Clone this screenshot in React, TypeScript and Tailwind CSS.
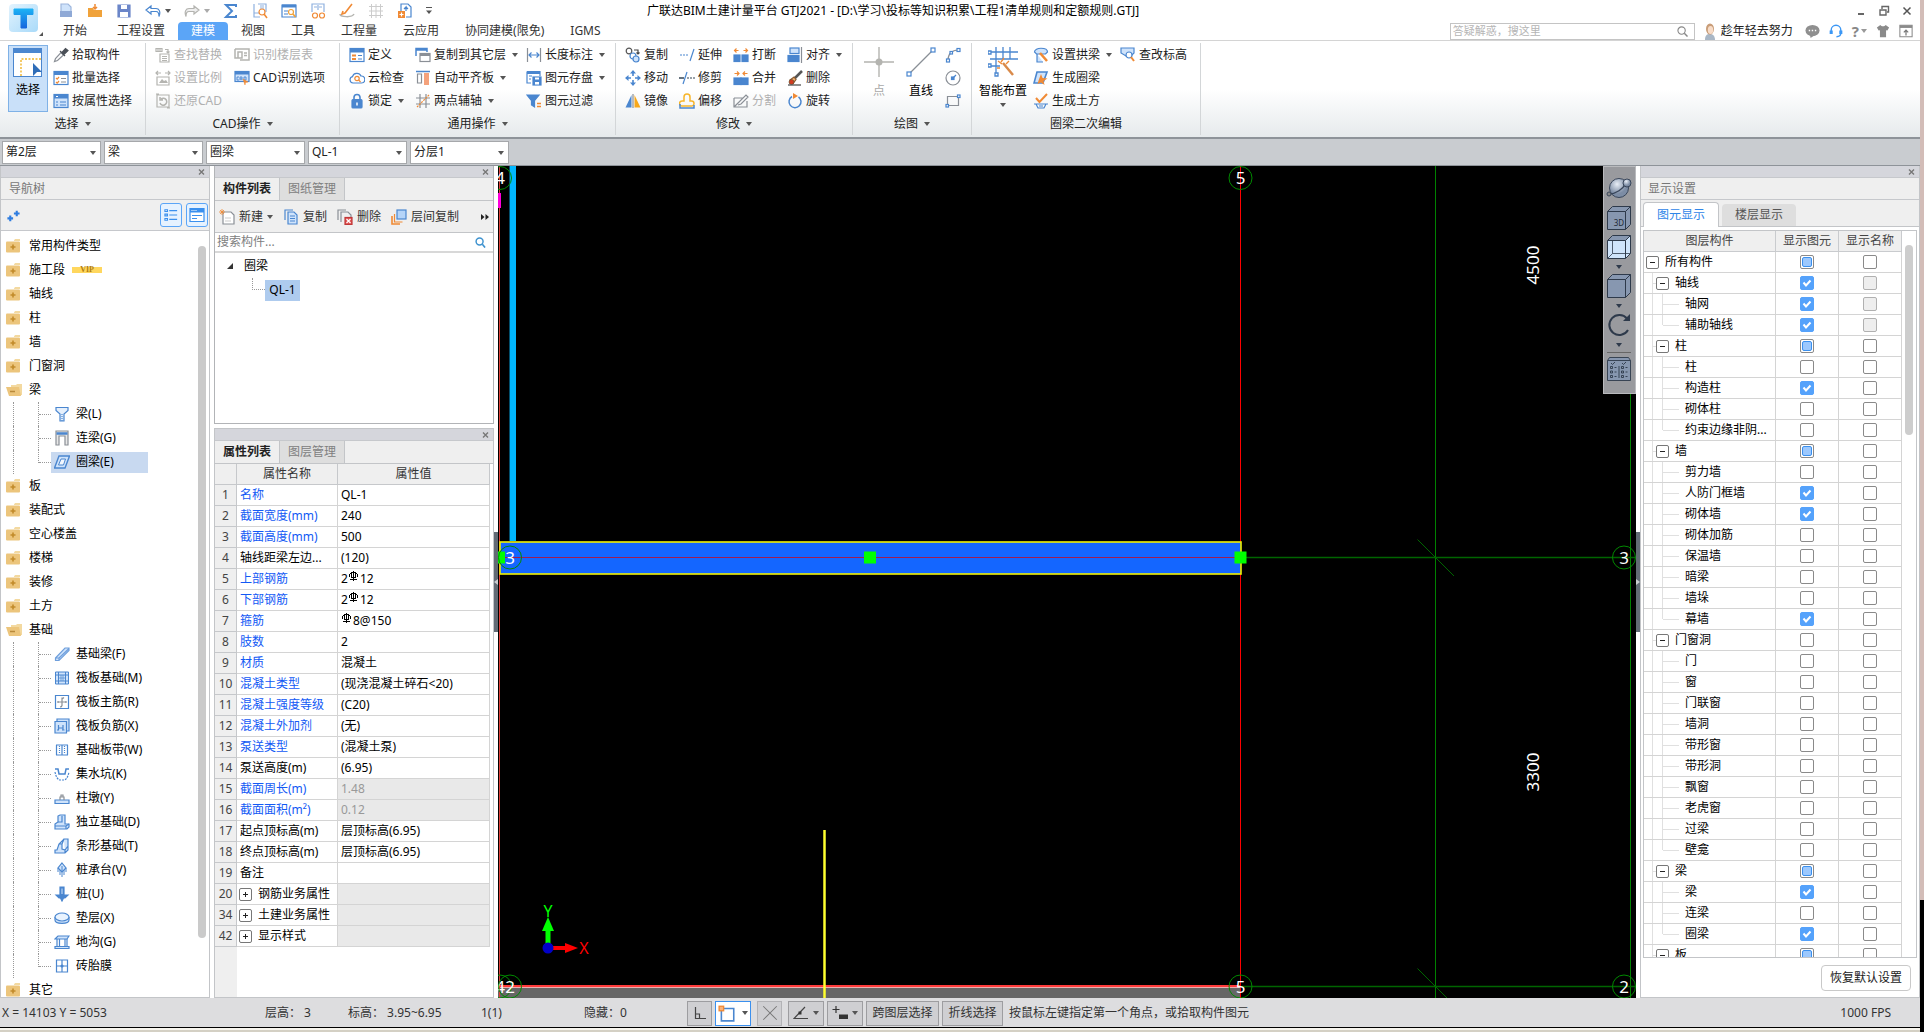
import React, { useEffect, useRef } from "react";

const B = "#4a86cf";
const L = "#cfe3fb";
const O = "#f08a35";
const G = "#8a8f96";
const D = "#b4b4b0";

type SvgProps = { s?: number; w?: number; children: React.ReactNode; box?: number };
const S = ({ s = 16, w, children, box = 16 }: SvgProps) => (
  <svg width={w ?? s} height={s} viewBox={`0 0 ${box} ${box}`} fill="none" stroke={B} strokeWidth={1.2} className="shrink-0" aria-hidden="true">
    {children}
  </svg>
);

const Caret = ({ tone = "#555" }: { tone?: string }) => (
  <svg width="6" height="4" viewBox="0 0 6 4" className="shrink-0" aria-hidden="true">
    <path d="M0 0h6L3 4z" fill={tone} />
  </svg>
);

/* ---------- ribbon icons ---------- */
const icons: Record<string, React.ReactNode> = {
  pick: <S><path d="M1.5 14.5l1-3 5.5-6 2.5 2.5-6 5.5z" stroke={G} fill="#fff" /><path d="M7 4l5 5M9 5.500l3.500-4 2.500 2-4 4z" stroke="#4a4f57" fill="#4a4f57" /></S>,
  batch: <S><rect x="1" y="1.500" width="14" height="13" fill="#fff" /><path d="M1 3.500h14" strokeWidth={3} /><path d="M3 8l1.200 1.200L6 7M3 12l1.200 1.200L6 11" stroke={O} /><path d="M8 8.500h5M8 12h5" stroke={G} /></S>,
  byprop: <S><rect x="1" y="1.500" width="14" height="13" fill={L} /><path d="M1 3.500h14" strokeWidth={4} /><path d="M3 9h2M3 12h2M7 9h6M7 12h6" /><path d="M3 3.500h2" stroke="#fff" /></S>,
  findrep: <S><path d="M1 1.500h6v3H1zM3 1.500v3M5 1.500v3M10 2.500h3v3M11.500 4.500l1.500 1.500 1.500-1.500" stroke={D} /><path d="M5 7h9v8H5zM7 9.500h5M7 11.500h5M7 13.500h5" stroke={D} /></S>,
  floortab: <S><path d="M1 2h14v11H6M1 2v9h3M4 5h4v6H4zM10 6h3M10 8.500h3" stroke={D} strokeWidth={1.500} /></S>,
  ratio: <S><path d="M1 3h5M10 3h5M3 1L1 3l2 2M13 1l2 2-2 2M2 7h12v8H2z" stroke={D} /><path d="M4 13l3-4 2 2 2-1 2 3z" fill={D} stroke="none" /></S>,
  cadopt: <S><rect x="1" y="1.500" width="14" height="10" fill={L} /><path d="M1 3h14" strokeWidth={3} /><path d="M5 7H3v3h2M6 10V7h2v3M6 9h2M10 7v3h2V7z" strokeWidth={0.900} /><path d="M9 9l5 3-2.500.500L11 15z" fill={O} stroke={O} strokeWidth={0.500} /></S>,
  restore: <S><path d="M2 2h12v12H2zM1 1h3M12 15h3" stroke={D} /><path d="M5 10a3.500 3.500 0 1 0 1-4M5 4v3h3" stroke={D} strokeWidth={1.500} /></S>,
  define: <S><rect x="1" y="1.500" width="14" height="13" fill="#fff" /><path d="M1 3.500h14" strokeWidth={4} /><path d="M3 8.500h4M3 12h4" stroke={O} strokeWidth={2} /><path d="M9 8.500h4M9 12h4" /></S>,
  cloud: <S><path d="M4 13a3.200 3.200 0 0 1-.500-6.300A4.500 4.500 0 0 1 12 6a3.500 3.500 0 0 1 .500 7z" fill="#fff" /><circle cx="8" cy="8.500" r="2.200" stroke={O} /><path d="M9.600 10l2 2" stroke={O} /></S>,
  lock: <S><path d="M5 7V4.500a3 3 0 0 1 6 0V7" strokeWidth={1.600} /><rect x="3" y="6.500" width="10" height="8.500" rx="1" fill={B} /><path d="M8 9.500v3" stroke="#fff" strokeWidth={1.500} /></S>,
  copyfloor: <S><path d="M1 9V1.500h11V5M1 3h11" strokeWidth={1.500} /><rect x="5" y="6.500" width="10" height="8" fill="#fff" stroke={G} /><path d="M5 8h10" stroke={G} strokeWidth={2} /></S>,
  level: <S><path d="M1 1.500h14" strokeWidth={1.500} /><path d="M2.500 4h4v9h-4z" stroke={G} /><path d="M9 3h5v12H9z" fill="#f4a27c" stroke="none" /></S>,
  axis2: <S><path d="M1 5h14M1 11h14M5 1v14M11 1v14" stroke={G} /><path d="M2 14L14 2" stroke={O} strokeDasharray="2 1" /></S>,
  length: <S><path d="M1.500 1v14M14.500 1v14" stroke={G} /><path d="M3 8h10M5.500 5.500L3 8l2.500 2.500M10.500 5.500L13 8l-2.500 2.500" /></S>,
  save: <S><path d="M1 1.500h13V6M1 1.500V13h4M3 6h3M3 9h2" /><path d="M1 3h13" strokeWidth={2} /><rect x="7" y="7" width="8" height="8" fill={B} /><path d="M9 7.500h4v2H9zM9 12h4v2.500H9z" fill="#fff" stroke="none" /></S>,
  filter: <S><path d="M1 2h12L8.500 7.500V14l-3-2V7.500z" fill={B} /><path d="M11 10.500h4M11 13.500h4" stroke={O} strokeWidth={1.500} /></S>,
  copy: <S><circle cx="4" cy="4" r="2.800" stroke="#555" /><path d="M9 3h4v4M11.500 5.500L13 7l1.500-1.500" stroke="#444" /><circle cx="8" cy="9" r="3" fill="#fff" /><circle cx="11" cy="12" r="3" fill={L} /></S>,
  move: <S><path d="M8 1v5M8 10v5M1 8h5M10 8h5" strokeWidth={1.600} /><path d="M8 0l3 3.500H5zM8 16l3-3.500H5zM0 8l3.500-3v6zM16 8l-3.500-3v6z" fill={B} stroke="none" /></S>,
  mirror: <S><path d="M6.500 2v12.500H.500z" fill={B} stroke="none" /><path d="M9.500 2v12.500h6z" fill="#f7a81b" stroke="none" /><path d="M8 1v14" stroke={G} /></S>,
  extend: <S><path d="M1 8h9" strokeDasharray="2 1" /><path d="M15 2l-4 12" /></S>,
  trim: <S><path d="M0 8h5" stroke="#345" strokeWidth={1.500} /><path d="M8 8h8" strokeDasharray="2 1" stroke="#345" /><path d="M8 2L4 14" /></S>,
  offset: <S><path d="M5 8V4a3 3 0 0 1 6 0v4h1.500a2 2 0 0 1 0 5H3a2 2 0 0 1 0-5z" stroke="#f7b52a" strokeWidth={1.500} /><path d="M1 11v4h14v-3" strokeWidth={1.500} /></S>,
  brk: <S><rect x="1" y="8" width="6" height="6.500" fill={B} /><rect x="9" y="8" width="6" height="6.500" fill={B} /><path d="M1.500 3.500h4M3.500 1.500l-2 2 2 2M14.500 3.500h-4M12.500 1.500l2 2-2 2" stroke={O} /></S>,
  merge: <S><rect x="1" y="8" width="7" height="6.500" fill={B} /><rect x="8" y="8" width="7" height="6.500" fill={B} /><path d="M1.500 3.500h4M4 1.500l2 2-2 2M14.500 3.500h-4M12 1.500l-2 2 2 2" stroke={O} /></S>,
  split: <S><path d="M1 5h9M1 5v9h13V8M1 14L13 2l2 2-7 7-3 1" stroke={G} /></S>,
  align: <S><rect x="3" y="1" width="9" height="5.500" fill={L} /><rect x="1" y="8.500" width="11" height="6" fill={B} /><path d="M14.500 0v16" stroke={G} /></S>,
  erase: <S><path d="M15 1l-8 8" stroke="#555" strokeWidth={2.500} /><path d="M3 10l4-3 2 2.500-3 4z" fill="#f0b070" stroke="#8a5a30" /><circle cx="4.500" cy="12" r="2.500" fill="#d23b20" stroke="#553" strokeWidth={0.600} /><path d="M1 15h13" stroke="#444" /></S>,
  rotate: <S><path d="M5 3.500a6 6 0 1 0 6.500.300" strokeWidth={1.500} /><path d="M6 0l5 3-5 3z" fill={O} stroke="none" /></S>,
  arch: <S><path d="M1.500 5c0-5 13-5 13 0l-2 2H3.500zM4 7v8h6" fill={L} /><path d="M7 6l7 8" stroke={O} strokeWidth={2.500} /></S>,
  genbeam: <S><path d="M4 2h10l-4 11H1z" fill={L} strokeWidth={1.600} /><path d="M8 4l1.500 4 5 .500-4 2.500 1 4-3.500-2.500L4.500 14l1.200-4z" fill={O} stroke="none" /></S>,
  earth: <S><path d="M3 5l3.500 4L14 1" stroke={O} strokeWidth={2} /><path d="M1 11h14M3 11l2 4h6l2-4M6 13h4" stroke={B} /></S>,
  elev: <S><path d="M1 1h13v5l-3 3H6L1 6z" fill={L} /><circle cx="9" cy="8" r="3" fill="#fff" /><path d="M11 10l3 4" stroke={O} strokeWidth={2} /></S>,
  arc: <S><path d="M3 13C3 7 7 3 13 3" stroke={G} /><rect x="1.500" y="12" width="3" height="3" fill="#fff" /><rect x="12" y="1.500" width="3" height="3" fill="#fff" /><rect x="5" y="4.500" width="2.500" height="2.500" fill="#fff" /></S>,
  circ: <S><circle cx="8" cy="8" r="7" stroke={G} /><path d="M8 8l3-3" /><rect x="6.500" y="7" width="2.500" height="2.500" fill={B} /></S>,
  rect: <S><path d="M2.500 3.500h11v9h-11z" stroke={G} /><rect x="1" y="11.500" width="2.500" height="2.500" fill="#fff" /><rect x="12.500" y="2" width="2.500" height="2.500" fill="#fff" /></S>,
};

/* ---------- component tree icons ---------- */
const treeIcons: Record<string, React.ReactNode> = {
  beamL: <S><path d="M2 1.500h12v3L10 8v7H6V8L2 4.500z" fill="#e6f0fc" /><path d="M8 8v7" strokeDasharray="1 1" /></S>,
  link: <S><path d="M2 1h12v14h-3V6H5v9H2z" fill="#e8e8e8" stroke={G} /><path d="M2.500 3.500h11" strokeWidth={2.500} /></S>,
  ring: <S><path d="M5 2h10.500l-4.500 12H.500z" fill={L} strokeWidth={1.400} /><path d="M7 5h4.500L9.500 11H4.500z" fill="#f2f7fe" strokeWidth={1} /></S>,
  fbeam: <S><path d="M1.500 12L11 2h4v2.500L5 14.500H1.500zM5 14.500V12L15 2.500M5 12H1.500" fill={L} stroke="#6f9fdc" /></S>,
  raft: <S><path d="M1.500 2h13v12h-13zM4.500 2v12M11.500 2v12M1.500 5h13M1.500 11h13" fill={L} strokeWidth={1} /><path d="M7 5v6M9 5v6M4.500 8h7" strokeWidth={0.700} /></S>,
  raftm: <S><path d="M1.500 1.500h13v13h-13z" /><path d="M4 8h8M8 3.500v8a2 2 0 0 1-2 1.500M8 5l2-1.500M4 7v2M12 7v2" stroke={G} /></S>,
  raftn: <S><path d="M1 3.500h11.500V15H1zM3 3.500V1h12v12h-2.500" fill={L} /><path d="M4.500 7v5M9 7v5M4.500 10H9M3 12h2M8 12h2.500" /></S>,
  strip: <S><path d="M2 3h12M2 13h12M2.500 3v10M13.500 3v10M8 3v10" fill={L} /><path d="M5.500 4v8M10.500 4v8" strokeDasharray="1 1" /></S>,
  pit: <S><path d="M1 3h3l1 5h6l1-5h3" strokeWidth={1.500} /><path d="M1 6c1 5 3 8 5 8h4c2 0 4-3 5-8" strokeDasharray="2 1" /></S>,
  pier: <S><path d="M1 10h14v3.500H1z" fill={L} /><path d="M6 10V7h4v3M7 7V5h2v2" stroke={G} /></S>,
  indep: <S><path d="M1 10l3-2V2l2-1h5v9h4v3l-2 2H1z" fill={L} /><path d="M4 8h4V2M1 12h11l3-2M12 12v3" /></S>,
  stripf: <S><path d="M1 15v-3h2l2-6 5-5h4v11l-3 3zM10 1L8 6v5l3 1v3M5 6h3M14 8l-3 4" fill={L} /></S>,
  cap: <S><path d="M8 1l4 5-4 4-4-4z" fill={L} /><path d="M8 4v11M4 6v4M12 6v4M6 8v5M10 8v5" strokeWidth={1} /></S>,
  pile: <S><path d="M6 1h4v8h4l-3 3H9.500L8 15l-1.500-3H5L2 9h4z" fill={B} /><path d="M7.500 2.500h1V8h-1z" fill={L} stroke="none" /></S>,
  cushion: <S><path d="M1 7v3c0 4.500 14 4.500 14 0V7" fill={L} /><ellipse cx="8" cy="7" rx="7" ry="4" fill="#e9f3fe" /></S>,
  trench: <S><path d="M1 5l3-3h11l-2 3zM1 12.500h14v2H1z" fill={L} /><path d="M3 5v8M5.500 5v8M11 5v8M13 5v8" /></S>,
  brick: <S><path d="M2.500 2h11v12h-11zM8 2v12M2.500 8h11" /><circle cx="8" cy="8" r="1" fill={B} /></S>,
};

const FolderClosed = () => (
  <svg width="15" height="14" viewBox="0 0 15 14" className="shrink-0" aria-hidden="true">
    <path d="M8 1.500L9 0h5v2H8z" fill="#f3d9a0" />
    <rect x="0" y="2.500" width="14" height="11" rx="1" fill="#ecc57c" />
    <path d="M7 5.500v5M4.500 8h5" stroke="#c28a2a" strokeWidth="1.600" />
  </svg>
);
const FolderOpen = () => (
  <svg width="16" height="12" viewBox="0 0 16 12" className="shrink-0" aria-hidden="true">
    <path d="M5 1h5l1-1h5v11h-2L12 3H5z" fill="#f3d9a0" />
    <path d="M0 3h13l2 9H3z" fill="#ecc57c" />
    <path d="M4 7.500h5" stroke="#b98a3a" strokeWidth="1.500" />
  </svg>
);

/* ---------- header ---------- */
const tabs = ["开始", "工程设置", "建模", "视图", "工具", "工程量", "云应用", "协同建模(限免)", "IGMS"];

const IconBtn = ({ label, children, className = "" }: { label: string; children: React.ReactNode; className?: string }) => (
  <button type="button" aria-label={label} className={`flex shrink-0 items-center justify-center ${className}`}>
    {children}
  </button>
);

const Header = () => (
  <header className="flex h-[41px] shrink-0 border-b border-[#d4d4d4] bg-white">
    <button type="button" aria-label="主菜单" className="flex w-[50px] shrink-0 items-end pb-1 pl-[9px]">
      <svg width="34" height="32" viewBox="0 0 34 32" aria-hidden="true">
        <defs>
          <linearGradient id="lg" x1="0" y1="0" x2="1" y2="1">
            <stop offset="0" stopColor="#e2f3fe" />
            <stop offset="1" stopColor="#a9daf9" />
          </linearGradient>
          <linearGradient id="tg" x1="0" y1="0" x2="0" y2="1">
            <stop offset="0" stopColor="#1cb2f5" />
            <stop offset="1" stopColor="#1566dd" />
          </linearGradient>
        </defs>
        <rect width="29" height="28" rx="4" fill="url(#lg)" />
        <path d="M5 5h19v5.500h-6.500V24h-5.500V10.500H5z" fill="url(#tg)" stroke="url(#tg)" strokeLinejoin="round" />
        <path d="M34 28v4h-4z" fill="#555" />
      </svg>
    </button>
    <div className="flex min-w-0 flex-1 flex-col">
      <div className="flex h-[22px] items-center">
        <div className="flex w-[382px] shrink-0 items-center gap-[13px] pl-2">
          <IconBtn label="新建"><S><path d="M3 1h7l3 3v5H3z" fill={L} stroke="#9db6dd" /><path d="M2 8h12v6H2z" fill="#8fa9d6" stroke="none" /></S></IconBtn>
          <IconBtn label="打开"><S><path d="M1 5h5l1 2h8v7H1z" fill="#f0a23a" stroke="none" /><path d="M8 1v5M6 4l2 2 2-2" stroke={O} strokeWidth={1.500} /></S></IconBtn>
          <IconBtn label="保存"><S><path d="M2 2h12v12H2z" fill="#6b86c9" stroke="#6b86c9" /><path d="M5 2h6v4H5zM4 9h8v5H4z" fill="#fff" stroke="none" /></S></IconBtn>
          <div className="flex items-center gap-1">
            <IconBtn label="撤销"><S><path d="M6 3L1 7l5 4V8.500h5c2 0 3 1.500 3 5 2-5 0-8-3-8H6z" fill="#fff" stroke={B} /></S></IconBtn>
            <Caret />
          </div>
          <div className="flex items-center gap-1">
            <IconBtn label="重做"><S><path d="M10 3l5 4-5 4V8.500H5c-2 0-3 1.500-3 5-2-5 0-8 3-8h5z" fill="#eee" stroke={D} /></S></IconBtn>
            <Caret tone="#aaa" />
          </div>
          <IconBtn label="汇总计算"><S><path d="M13 4V2H3l6 6-6 6h10v-2" strokeWidth={2} /></S></IconBtn>
          <IconBtn label="查看工程量"><S><path d="M2 1v13h6M2 10h5M6 1h8v8M8 3h4M8 5h4" stroke="#8fb1df" /><circle cx="10" cy="9" r="3" stroke={O} /><path d="M12 11l3 4" stroke={O} strokeWidth={1.600} /></S></IconBtn>
          <IconBtn label="查看报表"><S><path d="M1 2h14v12H1z" /><path d="M1 3h14" strokeWidth={3} /><path d="M3 8h4M3 11h4" /><circle cx="10" cy="9" r="2.500" stroke="#f0a23a" fill="#fff" /><path d="M12 11l2.500 3" stroke="#f0a23a" strokeWidth={1.600} /></S></IconBtn>
          <IconBtn label="合法性检查"><S><path d="M2 9V1h12v8M4 4h3M9 4h3M8 2v5" stroke="#8fb1df" /><circle cx="5" cy="12.500" r="2.500" stroke={O} fill="#fff" /><circle cx="12" cy="12.500" r="2.500" stroke={O} fill="#fff" /></S></IconBtn>
          <IconBtn label="标注"><S><path d="M13 1L6 10l-3 1 1-3" stroke={O} strokeWidth={1.600} /><path d="M1 11c0 3 12 4 14 0" stroke={D} strokeWidth={1.500} /></S></IconBtn>
          <IconBtn label="轴网"><S><path d="M1 3.500h14M1 8h14M1 12.500h14M3.500 1v14M8 1v14M12.500 1v14" stroke="#ccc" strokeWidth={1} /></S></IconBtn>
          <IconBtn label="导出"><S><path d="M4 8V1h7l3 3v10H9" /><path d="M9 8V4l-2 2M9 4l2 2" /><rect x="1" y="8" width="7" height="7" fill={O} stroke="none" /><path d="M4.500 9.500v4M2.500 11.500h4" stroke="#fff" /></S></IconBtn>
          <IconBtn label="自定义快速访问栏">
            <svg width="6" height="8" viewBox="0 0 6 8" aria-hidden="true"><path d="M0 .500h6" stroke="#555" /><path d="M0 3.500h6L3 7z" fill="#555" /></svg>
          </IconBtn>
        </div>
        <h1 className="ml-[215px] whitespace-nowrap text-[12px] leading-5 text-black">
          广联达BIM土建计量平台 GTJ2021 - [D:\学习\投标等知识积累\工程1清单规则和定额规则.GTJ]
        </h1>
        <div className="ml-auto flex items-center gap-[11px] pr-[7px] text-[#666]">
          <IconBtn label="最小化"><S s={12} box={12}><path d="M3 9h6" stroke="#666" strokeWidth={2} /></S></IconBtn>
          <IconBtn label="还原"><S s={12} box={12}><path d="M2 5h6v5H2zM4 4V1.500h6.500V7H9" stroke="#666" strokeWidth={1.400} /></S></IconBtn>
          <IconBtn label="关闭"><S s={12} box={12}><path d="M2.500 2.500l7 7M9.500 2.500l-7 7" stroke="#555" strokeWidth={1.500} /></S></IconBtn>
        </div>
      </div>
      <div className="flex h-[18px] items-stretch">
        <nav className="flex">
          {tabs.map((t, i) => (
            <button
              key={t}
              type="button"
              className={`whitespace-nowrap text-[12px] leading-[18px] ${i === 0 ? "pl-[13px] pr-[17px]" : "px-[13px]"} ${t === "建模" ? "rounded-t-sm bg-[#5ba5f7] text-white" : "text-[#333]"}`}
            >
              {t}
            </button>
          ))}
        </nav>
        <div className="ml-auto flex items-center pr-[7px]">
          <label className="flex h-[17px] w-[245px] items-center border border-[#c4c4c4] pl-0.5 pr-1.5">
            <input aria-label="搜索答疑" placeholder="答疑解惑，搜这里" className="min-w-0 flex-1 text-[11px] outline-none placeholder:text-[#b5b5b5]" />
            <S s={11} box={12}><circle cx="5" cy="5" r="4" stroke="#888" /><path d="M8 8l3.500 3.500" stroke="#888" strokeWidth={1.600} /></S>
          </label>
          <svg width="14" height="17" viewBox="0 0 14 17" className="ml-2 shrink-0" aria-hidden="true">
            <path d="M2 17c0-5 2-6 5-6s5 2 5 6z" fill="#a9b7c6" />
            <ellipse cx="7" cy="6" rx="4" ry="5.500" fill="#c99d78" />
            <ellipse cx="7.500" cy="7" rx="2.700" ry="4" fill="#f7dcc8" />
          </svg>
          <span className="ml-1 whitespace-nowrap text-[12px] text-[#222]">趁年轻去努力</span>
          <div className="ml-3 flex items-center gap-[9px]">
            <IconBtn label="消息"><S s={15}><ellipse cx="8" cy="7" rx="7.500" ry="6" fill="#8f8f8f" stroke="none" /><path d="M5 11l1 4 4-3z" fill="#8f8f8f" stroke="none" /><path d="M4 7h1.500M7.200 7h1.500M10.500 7H12" stroke="#fff" strokeWidth={1.500} /></S></IconBtn>
            <IconBtn label="客服"><S s={14}><path d="M2.500 10V7a5.500 5.500 0 0 1 11 0v3c0 3-2 4.500-5 4.500" stroke="#3b97f5" strokeWidth={1.600} /><path d="M2.500 7.500v4M13.500 7.500v4" stroke="#3b97f5" strokeWidth={3.500} /></S></IconBtn>
            <button type="button" aria-label="帮助" className="flex items-center gap-0.5 text-[15px] font-bold leading-4 text-[#888]">?<Caret tone="#999" /></button>
            <IconBtn label="换肤"><S s={14}><path d="M5 1c1 2 5 2 6 0l4 3-2 3.500-1.500-.500V15h-7V7L3 7.500 1 4z" fill="#8a8a8a" stroke="none" /></S></IconBtn>
            <IconBtn label="收起功能区"><S s={14}><path d="M1 1.500h14v13H1z" stroke="#8a8a8a" /><path d="M1 3h14" stroke="#8a8a8a" strokeWidth={3} /><path d="M8 13V7M5.500 9.500L8 7l2.500 2.500" stroke="#777" strokeWidth={1.400} /></S></IconBtn>
          </div>
        </div>
      </div>
    </div>
  </header>
);

/* ---------- ribbon ---------- */
const Cmd = ({ icon, text, drop, off }: { icon: string; text: string; drop?: boolean; off?: boolean }) => (
  <button type="button" disabled={off} className={`flex h-[23px] items-center gap-[3px] whitespace-nowrap text-[12px] ${off ? "text-[#b0b0b0]" : "text-[#1c1c1c]"}`}>
    {icons[icon]}
    <span>{text}</span>
    {drop && <span className="ml-[3px]"><Caret /></span>}
  </button>
);

const Group = ({ title, width, drop = true, children }: { title: string; width: string; drop?: boolean; children: React.ReactNode }) => (
  <section className={`flex shrink-0 flex-col py-[2px] ${width}`}>
    <div className="flex flex-1 flex-col border-r border-[#d3d6d8]">
      <div className="flex h-[69px] shrink-0">{children}</div>
      <div className="flex flex-1 items-center justify-center gap-[6px] text-[12px] text-[#222]">
        {title}
        {drop && <Caret />}
      </div>
    </div>
  </section>
);

const Ribbon = () => (
  <div className="flex h-[98px] shrink-0 border-b-2 border-[#8e9399] bg-linear-to-b from-white from-50% to-[#e6eaec]">
    <Group title="选择" width="w-[146px]">
      <button type="button" className="ml-2 mr-[5px] mt-0.5 flex h-[67px] w-10 shrink-0 flex-col items-center border border-[#7fb1e6] bg-[#c9e0f9] pt-0.5 text-[12px]">
        <svg width="30" height="30" viewBox="0 0 30 30" aria-hidden="true">
          <rect x="0.500" y="0.500" width="28" height="28" fill="#fff" stroke={B} />
          <rect width="29" height="5" fill={B} />
          <path d="M8 28V11h20" fill="none" stroke="#f0b429" strokeDasharray="2 1.500" strokeWidth="1.400" />
          <path d="M20 15l9 9h-5l-4 4z" fill="#2f6db8" />
        </svg>
        <span className="mt-1">选择</span>
      </button>
      <div>
        <Cmd icon="pick" text="拾取构件" />
        <Cmd icon="batch" text="批量选择" />
        <Cmd icon="byprop" text="按属性选择" />
      </div>
    </Group>
    <Group title="CAD操作" width="w-[194px]">
      <div className="ml-[9px] w-[79px]">
        <Cmd icon="findrep" text="查找替换" off />
        <Cmd icon="ratio" text="设置比例" off />
        <Cmd icon="restore" text="还原CAD" off />
      </div>
      <div>
        <Cmd icon="floortab" text="识别楼层表" off />
        <Cmd icon="cadopt" text="CAD识别选项" />
      </div>
    </Group>
    <Group title="通用操作" width="w-[276px]">
      <div className="ml-[9px] w-[66px]">
        <Cmd icon="define" text="定义" />
        <Cmd icon="cloud" text="云检查" />
        <Cmd icon="lock" text="锁定" drop />
      </div>
      <div className="w-[111px]">
        <Cmd icon="copyfloor" text="复制到其它层" drop />
        <Cmd icon="level" text="自动平齐板" drop />
        <Cmd icon="axis2" text="两点辅轴" drop />
      </div>
      <div>
        <Cmd icon="length" text="长度标注" drop />
        <Cmd icon="save" text="图元存盘" drop />
        <Cmd icon="filter" text="图元过滤" />
      </div>
    </Group>
    <Group title="修改" width="w-[237px]">
      <div className="ml-[9px] w-[54px]">
        <Cmd icon="copy" text="复制" />
        <Cmd icon="move" text="移动" />
        <Cmd icon="mirror" text="镜像" />
      </div>
      <div className="w-[54px]">
        <Cmd icon="extend" text="延伸" />
        <Cmd icon="trim" text="修剪" />
        <Cmd icon="offset" text="偏移" />
      </div>
      <div className="w-[54px]">
        <Cmd icon="brk" text="打断" />
        <Cmd icon="merge" text="合并" />
        <Cmd icon="split" text="分割" off />
      </div>
      <div>
        <Cmd icon="align" text="对齐" drop />
        <Cmd icon="erase" text="删除" />
        <Cmd icon="rotate" text="旋转" />
      </div>
    </Group>
    <Group title="绘图" width="w-[119px]">
      <button type="button" disabled className="ml-[11px] flex w-[30px] flex-col items-center pt-1 text-[12px] text-[#a9a9a9]">
        <svg width="30" height="30" viewBox="0 0 30 30" aria-hidden="true">
          <path d="M15 0v30M0 15h30" stroke={D} strokeWidth="1.400" />
          <circle cx="15" cy="15" r="3.500" fill={D} />
        </svg>
        <span className="mt-1.5">点</span>
      </button>
      <button type="button" className="ml-3 flex w-[30px] flex-col items-center pt-1 text-[12px]">
        <svg width="30" height="30" viewBox="0 0 30 30" fill="#fff" stroke={B} strokeWidth="1.200" aria-hidden="true">
          <path d="M3 27L27 3" stroke={G} />
          <rect x="1" y="25" width="4" height="4" />
          <rect x="25" y="1" width="4" height="4" />
        </svg>
        <span className="mt-1.5">直线</span>
      </button>
      <div className="ml-[9px] flex flex-col">
        <IconBtn label="弧" className="h-[23px]">{icons.arc}</IconBtn>
        <IconBtn label="圆" className="h-[23px]">{icons.circ}</IconBtn>
        <IconBtn label="矩形" className="h-[23px]">{icons.rect}</IconBtn>
      </div>
    </Group>
    <Group title="圈梁二次编辑" width="w-[229px]" drop={false}>
      <button type="button" className="ml-[7px] mr-1.5 flex w-12 flex-col items-center whitespace-nowrap pt-1 text-[12px]">
        <svg width="30" height="30" viewBox="0 0 30 30" fill="none" stroke={B} strokeWidth="1.300" aria-hidden="true">
          <path d="M2 5h28M2 12h28M2 19h10M8 0v28M15 0v12M22 0v12" />
          <path d="M0 4h3v3H0zM0 17h3v3H0zM7 26h3v3H7z" fill="#fff" />
          <path d="M15 16l10 12" stroke="#d98a4a" strokeWidth="2.500" />
          <path d="M10 14l4 3M16 11l-3 4M21 14l-3 3M9 21h3" stroke={O} />
        </svg>
        <span className="mb-1 mt-1.5 leading-4">智能布置</span>
        <Caret />
      </button>
      <div className="w-[87px]">
        <Cmd icon="arch" text="设置拱梁" drop />
        <Cmd icon="genbeam" text="生成圈梁" />
        <Cmd icon="earth" text="生成土方" />
      </div>
      <div>
        <Cmd icon="elev" text="查改标高" />
      </div>
    </Group>
  </div>
);

const selectors: [string, string][] = [["楼层", "第2层"], ["构件大类", "梁"], ["构件类型", "圈梁"], ["构件", "QL-1"], ["分层", "分层1"]];

const SelectorBar = () => (
  <div className="flex h-[27px] shrink-0 items-center gap-[3px] border-b border-[#8e9399] bg-[#c9ccd0] pl-0.5">
    {selectors.map(([label, value]) => (
      <div key={label} className="relative">
        <select aria-label={label} className="h-[23px] w-[99px] appearance-none border border-[#a6a8ab] bg-white px-[3px] text-[12px] text-[#222]">
          <option>{value}</option>
        </select>
        <span className="pointer-events-none absolute right-[5px] top-[10px] flex"><Caret /></span>
      </div>
    ))}
  </div>
);

/* ---------- shared panel parts ---------- */
const PanelStrip = () => (
  <div className="flex h-[12px] shrink-0 items-center justify-end border-b border-[#c6c8cc] bg-[#d5d6dc] pr-1">
    <IconBtn label="关闭面板">
      <svg width="7" height="6" viewBox="0 0 7 6" aria-hidden="true"><path d="M1 .500l5 5M6 .500l-5 5" stroke="#777" strokeWidth="1.400" /></svg>
    </IconBtn>
  </div>
);

const PanelTabs = ({ items }: { items: [string, string] }) => (
  <div className="flex h-[23px] shrink-0 border-b border-[#c3c5c8] bg-[#efefef] text-[12px]">
    <button type="button" className="w-[65px] border-r border-[#c3c5c8] font-bold text-[#222]">{items[0]}</button>
    <button type="button" className="w-[65px] border-r border-[#c3c5c8] bg-[#dedede] text-[#808080]">{items[1]}</button>
  </div>
);

/* ---------- navigation tree ---------- */
type NavNode = { name: string; vip?: boolean; children?: [string, string][] };
const nav: NavNode[] = [
  { name: "常用构件类型" }, { name: "施工段", vip: true }, { name: "轴线" }, { name: "柱" }, { name: "墙" }, { name: "门窗洞" },
  { name: "梁", children: [["梁(L)", "beamL"], ["连梁(G)", "link"], ["圈梁(E)", "ring"]] },
  { name: "板" }, { name: "装配式" }, { name: "空心楼盖" }, { name: "楼梯" }, { name: "装修" }, { name: "土方" },
  {
    name: "基础",
    children: [
      ["基础梁(F)", "fbeam"], ["筏板基础(M)", "raft"], ["筏板主筋(R)", "raftm"], ["筏板负筋(X)", "raftn"], ["基础板带(W)", "strip"],
      ["集水坑(K)", "pit"], ["柱墩(Y)", "pier"], ["独立基础(D)", "indep"], ["条形基础(T)", "stripf"], ["桩承台(V)", "cap"],
      ["桩(U)", "pile"], ["垫层(X)", "cushion"], ["地沟(G)", "trench"], ["砖胎膜", "brick"],
    ],
  },
  { name: "其它" },
];

const NavPanel = () => (
  <aside className="flex w-[210px] shrink-0 flex-col border border-t-0 border-[#c3c5c8] bg-[#efefef]">
    <PanelStrip />
    <h2 className="flex h-[22px] shrink-0 items-center border-b border-[#c6c8cc] pl-2 text-[12px] text-[#777]">导航树</h2>
    <div className="flex h-[31px] shrink-0 items-center border-b border-[#c6c8cc] pl-1.5 pr-px">
      <S s={13}><path d="M4 8v7M.500 11.500h7M12 2v7M8.500 5.500h7" stroke="#2f7de0" strokeWidth={2.600} /></S>
      <button type="button" aria-label="列表视图" className="ml-auto flex h-6 w-[22px] items-center justify-center rounded-[3px] border border-[#5ba5f7] bg-[#e6f2ff]">
        <S s={14}><path d="M1 2h3v2H1zM1 7h3v2H1zM1 12h3v2H1zM6 3h9M6 8h9M6 13h9" stroke="#3b90ee" /></S>
      </button>
      <button type="button" aria-label="窗口视图" className="ml-1 flex h-6 w-[22px] items-center justify-center rounded-[3px] border border-[#5ba5f7] bg-[#e6f2ff]">
        <S s={16}><path d="M1 1.500h14v13H1z" fill="#fff" stroke="#3b90ee" /><path d="M1 3.500h14" stroke="#3b90ee" strokeWidth={4} /><path d="M3 8.500h10M3 11.500h5" stroke="#3b90ee" /><path d="M2.500 3.500h5" stroke="#fff" strokeDasharray="1 1" /></S>
      </button>
    </div>
    <div className="flex min-h-0 flex-1 overflow-hidden bg-white">
      <ul className="min-w-0 flex-1 pt-[3px] text-[12px] text-black">
        {nav.map((n) => (
          <li key={n.name}>
            <div className="flex h-6 items-center pl-[5px]">
              <span className="w-[23px]">{n.children ? <FolderOpen /> : <FolderClosed />}</span>
              {n.name}
              {n.vip && <span className="ml-[7px] h-[6px] w-[30px] bg-[#ffd75e] text-center font-['Liberation_Serif',serif] text-[8px] font-bold leading-[6px] text-[#b07d10]">VIP</span>}
            </div>
            {n.children && (
              <ul>
                {n.children.map(([name, icon], i, all) => (
                  <li key={name} className="flex h-6 pl-3">
                    <span className="w-[25px] border-l border-dotted border-[#999]" />
                    <span className={`w-[13px] border-l border-dotted border-[#999] ${i === all.length - 1 ? "h-[13px]" : ""}`}>
                      <span className="block h-[13px] border-b border-dotted border-[#999]" />
                    </span>
                    <span className={`my-auto flex h-[21px] w-[97px] items-center gap-[6px] whitespace-nowrap pl-[3px] ${icon === "ring" ? "bg-[#c8d9f0]" : ""}`}>
                      {treeIcons[icon]}
                      {name}
                    </span>
                  </li>
                ))}
              </ul>
            )}
          </li>
        ))}
      </ul>
      <div className="flex w-[11px] shrink-0 flex-col pb-[59px] pt-[15px]">
        <span className="w-2 flex-1 rounded-full bg-[#cacaca]" />
      </div>
    </div>
  </aside>
);

/* ---------- component list and properties ---------- */
const ToolBtn = ({ icon, text, drop }: { icon: React.ReactNode; text: string; drop?: boolean }) => (
  <button type="button" className="flex items-center gap-1 whitespace-nowrap">
    {icon}
    {text}
    {drop && <Caret />}
  </button>
);

const ListPanel = () => (
  <section className="flex h-[258px] shrink-0 flex-col border border-t-0 border-[#b2b4b7] bg-white">
    <PanelStrip />
    <PanelTabs items={["构件列表", "图纸管理"]} />
    <div className="flex h-8 shrink-0 items-center gap-[10px] border-b border-[#c3c5c8] bg-[#efefef] pl-1 pr-1 text-[12px] text-[#333]">
      <ToolBtn text="新建" drop icon={<S><path d="M4 3h8l3 3v9H4z" fill="#fff" stroke={G} /><path d="M6 9h6M6 12h6" stroke="#ccc" /><path d="M3 0v6M0 3h6M1 1l4 4M5 1L1 5" stroke={O} strokeWidth={0.800} /></S>} />
      <ToolBtn text="复制" icon={<S><path d="M2 11V1h8" /><path d="M5 3h6l3 3v9H5zM7 7h5M7 9.500h5M7 12h5" fill={L} /></S>} />
      <ToolBtn text="删除" icon={<S><path d="M1 11V1h8M4 13V3h7l3 3v2" stroke={G} /><rect x="8" y="8.500" width="7" height="7" fill="#e05252" stroke="#c03838" /><path d="M9.500 10l4 4M13.500 10l-4 4" stroke="#fff" /></S>} />
      <ToolBtn text="层间复制" icon={<S><path d="M1 7v8h8" stroke={O} strokeWidth={1.600} /><path d="M3.500 5v8h8" stroke={O} /><rect x="6" y="1" width="9" height="9" fill="#b5d4f8" /></S>} />
      <button type="button" aria-label="更多" className="ml-auto">
        <svg width="8" height="6" viewBox="0 0 8 6" aria-hidden="true"><path d="M0 0l3.500 3L0 6zM4.500 0L8 3 4.500 6z" fill="#222" /></svg>
      </button>
    </div>
    <label className="flex h-[20px] shrink-0 items-center border-b-2 border-[#d8d8d8] pl-0.5 pr-[7px]">
      <input aria-label="搜索构件" placeholder="搜索构件..." className="min-w-0 flex-1 text-[12px] outline-none placeholder:text-[#808080]" />
      <S s={11} box={12}><circle cx="5" cy="5" r="3.800" stroke="#3f93cf" strokeWidth={1.600} /><path d="M8 8l3 3.500" stroke="#3f93cf" strokeWidth={1.800} /></S>
    </label>
    <ul className="pt-px text-[12px]">
      <li>
        <div className="flex h-6 items-center gap-[11px] pl-3">
          <svg width="6" height="6" viewBox="0 0 6 6" aria-hidden="true"><path d="M6 0v6H0z" fill="#333" /></svg>
          圈梁
        </div>
        <ul>
          <li className="flex h-6 pl-[37px]">
            <span className="h-3 w-[13px] border-b border-l border-dotted border-[#999]" />
            <span className="flex h-[21px] w-[35px] items-center justify-center self-center bg-[#aecbee]">QL-1</span>
          </li>
        </ul>
      </li>
    </ul>
  </section>
);

const Rebar = () => (
  <svg width="10" height="12" viewBox="0 0 10 12" fill="none" stroke="#000" shapeRendering="crispEdges" className="mx-px inline-block align-[0px]" aria-label="三级钢">
    <path d="M4.500 0v10M2.500 2v5M6.500 2v5M2 1.500h5M2 6.500h5M.500 3v3M8.500 3v3M1 2.500h1M7 2.500h1M1 8.500h7" />
  </svg>
);

type Prop = { n: number; name: string; value: React.ReactNode; tone?: "blue" | "calc" | "group" };
const props: Prop[] = [
  { n: 1, name: "名称", value: "QL-1", tone: "blue" },
  { n: 2, name: "截面宽度(mm)", value: "240", tone: "blue" },
  { n: 3, name: "截面高度(mm)", value: "500", tone: "blue" },
  { n: 4, name: "轴线距梁左边...", value: "(120)" },
  { n: 5, name: "上部钢筋", value: <>2<Rebar />12</>, tone: "blue" },
  { n: 6, name: "下部钢筋", value: <>2<Rebar />12</>, tone: "blue" },
  { n: 7, name: "箍筋", value: <><Rebar />8@150</>, tone: "blue" },
  { n: 8, name: "肢数", value: "2", tone: "blue" },
  { n: 9, name: "材质", value: "混凝土", tone: "blue" },
  { n: 10, name: "混凝土类型", value: "(现浇混凝土碎石<20)", tone: "blue" },
  { n: 11, name: "混凝土强度等级", value: "(C20)", tone: "blue" },
  { n: 12, name: "混凝土外加剂", value: "(无)", tone: "blue" },
  { n: 13, name: "泵送类型", value: "(混凝土泵)", tone: "blue" },
  { n: 14, name: "泵送高度(m)", value: "(6.95)" },
  { n: 15, name: "截面周长(m)", value: "1.48", tone: "calc" },
  { n: 16, name: "截面面积(m²)", value: "0.12", tone: "calc" },
  { n: 17, name: "起点顶标高(m)", value: "层顶标高(6.95)" },
  { n: 18, name: "终点顶标高(m)", value: "层顶标高(6.95)" },
  { n: 19, name: "备注", value: "" },
  { n: 20, name: "钢筋业务属性", value: "", tone: "group" },
  { n: 34, name: "土建业务属性", value: "", tone: "group" },
  { n: 42, name: "显示样式", value: "", tone: "group" },
];

const Toggle = ({ open, label }: { open: boolean; label: string }) => (
  <button type="button" aria-label={label} aria-expanded={open} className="flex size-[13px] shrink-0 items-center justify-center rounded-[2px] border border-[#777] bg-white">
    <svg width="7" height="7" viewBox="0 0 7 7" aria-hidden="true"><path d={open ? "M1 3.500h5" : "M1 3.500h5M3.500 1v5"} stroke="#222" /></svg>
  </button>
);

const PropPanel = () => (
  <section className="flex min-h-0 flex-1 flex-col border border-[#c3c5c8] bg-white">
    <PanelStrip />
    <PanelTabs items={["属性列表", "图层管理"]} />
    <div className="flex min-h-0 flex-1 flex-col overflow-hidden pr-[3px]">
      <table className="w-full table-fixed border-separate border-spacing-0 text-[12px]">
        <colgroup>
          <col className="w-[22px]" />
          <col className="w-[101px]" />
          <col />
        </colgroup>
        <thead>
          <tr className="h-[21px] bg-[#efefef] text-[#333]">
            <th aria-label="序号" className="border-b border-r border-[#c6c8cb] p-0" />
            <th className="border-b border-r border-[#c6c8cb] p-0 font-normal leading-4">属性名称</th>
            <th className="border-b border-r border-[#c6c8cb] p-0 font-normal leading-4">属性值</th>
          </tr>
        </thead>
        <tbody>
          {props.map((p) => (
            <tr key={p.n} className="h-[21px] whitespace-nowrap leading-4">
              <td className="border-b border-r border-[#c6c8cb] bg-[#efefef] p-0 text-center text-[#444]">{p.n}</td>
              <td className={`border-b border-r border-[#d4d4d4] p-0 ${p.tone === "group" ? "pl-0.5" : "pl-[3px]"} ${p.tone === "blue" || p.tone === "calc" ? "text-[#1259f5]" : "text-black"}`}>
                {p.tone === "group" ? <span className="flex items-center gap-[6px]"><Toggle open={false} label={p.name} />{p.name}</span> : p.name}
              </td>
              <td className={`border-b border-r border-[#d4d4d4] p-0 pl-[3px] ${p.tone === "calc" ? "bg-[#e9e9e9] text-[#999]" : p.tone === "group" ? "bg-[#e9e9e9]" : "text-black"}`}>{p.value}</td>
            </tr>
          ))}
        </tbody>
      </table>
      <div className="w-[22px] flex-1 bg-[#efefef]" />
    </div>
  </section>
);

/* ---------- splitter handles ---------- */
const Splitter = ({ dir }: { dir: "left" | "right" }) => (
  <div className="flex w-1 shrink-0 flex-col justify-center bg-white">
    <button type="button" aria-label="收起面板" className="flex h-[100px] w-1 items-center bg-[#626b75]">
      <svg width="4" height="6" viewBox="0 0 4 6" aria-hidden="true"><path d={dir === "left" ? "M4 0L0 3l4 3z" : "M0 0l4 3-4 3z"} fill="#c9ccd0" /></svg>
    </button>
  </div>
);

/* ---------- drawing area ---------- */
const Bubble = ({ x, y, t }: { x: number; y: number; t: string }) => (
  <g>
    <circle cx={x} cy={y} r="11.500" fill="none" stroke="#008a00" />
    <text x={x} y={y + 6} textAnchor="middle" fontSize="17" fill="#fff">{t}</text>
  </g>
);

const Cube = ({ face = "#8797b0", children }: { face?: string; children?: React.ReactNode }) => (
  <svg width="24" height="24" viewBox="0 0 24 24" stroke="#2e3a4b" strokeLinejoin="round" aria-hidden="true">
    <path d="M.500 5.500l5-5h18l-5 5z" fill="#8797b0" />
    <path d="M18.500 5.500l5-5v18l-5 5z" fill={face} />
    <path d="M.500 5.500h18v18H.500z" fill={face} />
    {children}
  </svg>
);

const ViewTools = () => (
  <div className="absolute right-0 top-0 flex w-[33px] flex-col items-center border border-[#b9babd] bg-[#999a9e] pb-3 pr-px pt-[9px]">
    <IconBtn label="动态观察">
      <svg width="26" height="24" viewBox="0 0 26 24" aria-hidden="true">
        <defs><radialGradient id="gl" cx="0.400" cy="0.300"><stop offset="0" stopColor="#e8eef6" /><stop offset="1" stopColor="#7c8ca4" /></radialGradient></defs>
        <circle cx="13" cy="12" r="9.500" fill="url(#gl)" stroke="#39465a" />
        <path d="M3 18c7 0 14-5 17-11" fill="none" stroke="#39465a" strokeWidth="1.400" />
        <circle cx="21" cy="7" r="4" fill="url(#gl)" stroke="#39465a" />
        <circle cx="3" cy="18" r="2" fill="#888" stroke="#39465a" />
      </svg>
    </IconBtn>
    <IconBtn label="三维视图" className="mt-1.5"><Cube><text x="12" y="19.500" textAnchor="middle" fontSize="8" stroke="none" fill="#1e2937">3D</text></Cube></IconBtn>
    <IconBtn label="俯视" className="mt-[5px]"><Cube face="#cfe4fb"><path d="M5.500 5.500v13h18M5.500 18.500l-5 5" fill="none" strokeWidth="0.800" /></Cube></IconBtn>
    <span className="my-[5px] flex h-[5px] items-center"><Caret tone="#2e3a4b" /></span>
    <IconBtn label="着色模式"><Cube /></IconBtn>
    <span className="my-[5px] flex h-[5px] items-center"><Caret tone="#2e3a4b" /></span>
    <IconBtn label="旋转视图">
      <svg width="24" height="24" viewBox="0 0 24 24" fill="none" stroke="#2e3a4b" strokeWidth="2" aria-hidden="true"><path d="M21 17a10 10 0 1 1-1-11.500" /><path d="M23 1v7h-7z" fill="#2e3a4b" stroke="none" /></svg>
    </IconBtn>
    <span className="my-[5px] flex h-[5px] items-center"><Caret tone="#2e3a4b" /></span>
    <span className="mb-1 h-px w-6 bg-[#666]" />
    <IconBtn label="显示设置">
      <svg width="24" height="24" viewBox="0 0 24 24" fill="none" stroke="#2e3a4b" strokeWidth="0.900" aria-hidden="true">
        <path d="M.500 3.500l2-3h19l2 3v20H.500z" fill="#8797b0" /><path d="M.500 3.500h23M12 9v12M4 6l1.500 1.500L8 5M15 6l1.500 1.500L19 5" />
        <path d="M3.500 9.500h2v2h-2zM3.500 14h2v2h-2zM3.500 18.500h2v2h-2zM14.500 9.500h2v2h-2zM14.500 14h2v2h-2zM14.500 18.500h2v2h-2zM7.500 10.500h2M7.500 15h2M7.500 19.500h2M18.500 10.500h2M18.500 15h2M18.500 19.500h2" />
      </svg>
    </IconBtn>
  </div>
);

const Canvas = () => (
  <main className="relative min-w-0 flex-1 overflow-hidden bg-black">
    <svg viewBox="0 0 1138 832" preserveAspectRatio="xMinYMin slice" className="absolute inset-0 size-full font-['Noto_Sans',sans-serif]" role="img" aria-label="圈梁平面图">
      <g stroke="#008000" fill="none">
        <path d="M937.500 0V832M1132.500 0V832" />
        <path d="M742 391.500H1138M742 820.500H1138" stroke="#006400" strokeWidth="1.400" />
        <path d="M919.500 373.500L956 410M919.500 802.500L949 832" stroke="#006400" />
      </g>
      <path d="M0 822h743v10H0z" fill="#666" />
      <path d="M0 820h743" stroke="#ff3b3b" strokeWidth="2" />
      <path d="M0 821.500h743" stroke="#e8b0b0" strokeWidth="1" />
      <path d="M326.500 664V832" stroke="#ffff2e" strokeWidth="2.500" />
      <path d="M11.500 0V375" stroke="#03506e" />
      <path d="M12 0h6v375h-6z" fill="#00b7ff" />
      <path d="M1.500 0V832" stroke="#e0423a" />
      <path d="M742.500 0V832" stroke="#f00" />
      <path d="M0 27h3v15H0z" fill="#ff00dc" />
      <rect x="2" y="376" width="741" height="32" fill="#1466ff" stroke="#f2f200" strokeWidth="1.600" />
      <path d="M2 391.500H742" stroke="#a01c50" />
      <g fill="#0f0">
        <rect x="-5" y="385.500" width="12" height="12" />
        <rect x="366" y="385.500" width="12" height="12" />
        <rect x="736.500" y="385.500" width="12" height="12" />
      </g>
      <Bubble x={2} y={12} t="4" />
      <Bubble x={742.5} y={12} t="5" />
      <Bubble x={12} y={391.5} t="3" />
      <Bubble x={1126} y={391.5} t="3" />
      <Bubble x={2} y={820.5} t="4" />
      <Bubble x={12} y={820.5} t="2" />
      <Bubble x={742.5} y={820.5} t="5" />
      <Bubble x={1126} y={820.5} t="2" />
      <text transform="translate(1041 99) rotate(-90)" textAnchor="middle" fontSize="17" fill="#fff">4500</text>
      <text transform="translate(1041 606) rotate(-90)" textAnchor="middle" fontSize="17" fill="#fff">3300</text>
      <path d="M50 782V764" stroke="#0f0" strokeWidth="5" />
      <path d="M50 751l6 14H44z" fill="#0f0" />
      <path d="M50 782h19" stroke="#f00" strokeWidth="4" />
      <path d="M80 782l-13-5v10z" fill="#f00" />
      <circle cx="50" cy="782" r="5.500" fill="#0000c8" />
      <text x="50" y="751" textAnchor="middle" fontSize="16" fill="#0f0">Y</text>
      <text x="86" y="788" textAnchor="middle" fontSize="16" fill="#f00">X</text>
    </svg>
    <ViewTools />
  </main>
);

/* ---------- display settings ---------- */
type State = 0 | 1 | 2; // unchecked, checked, partial
type Row = { name: string; level: 0 | 1 | 2; show: State; locked?: boolean };
const rows: Row[] = [
  { name: "所有构件", level: 0, show: 2 },
  { name: "轴线", level: 1, show: 1, locked: true }, { name: "轴网", level: 2, show: 1, locked: true }, { name: "辅助轴线", level: 2, show: 1, locked: true },
  { name: "柱", level: 1, show: 2 }, { name: "柱", level: 2, show: 0 }, { name: "构造柱", level: 2, show: 1 }, { name: "砌体柱", level: 2, show: 0 }, { name: "约束边缘非阴...", level: 2, show: 0 },
  { name: "墙", level: 1, show: 2 }, { name: "剪力墙", level: 2, show: 0 }, { name: "人防门框墙", level: 2, show: 1 }, { name: "砌体墙", level: 2, show: 1 }, { name: "砌体加筋", level: 2, show: 0 },
  { name: "保温墙", level: 2, show: 0 }, { name: "暗梁", level: 2, show: 0 }, { name: "墙垛", level: 2, show: 0 }, { name: "幕墙", level: 2, show: 1 },
  { name: "门窗洞", level: 1, show: 0 }, { name: "门", level: 2, show: 0 }, { name: "窗", level: 2, show: 0 }, { name: "门联窗", level: 2, show: 0 }, { name: "墙洞", level: 2, show: 0 },
  { name: "带形窗", level: 2, show: 0 }, { name: "带形洞", level: 2, show: 0 }, { name: "飘窗", level: 2, show: 0 }, { name: "老虎窗", level: 2, show: 0 }, { name: "过梁", level: 2, show: 0 }, { name: "壁龛", level: 2, show: 0 },
  { name: "梁", level: 1, show: 2 }, { name: "梁", level: 2, show: 1 }, { name: "连梁", level: 2, show: 0 }, { name: "圈梁", level: 2, show: 1 },
  { name: "板", level: 1, show: 2 },
];

const Check = ({ label, state, disabled }: { label: string; state: State; disabled?: boolean }) => {
  const ref = useRef<HTMLInputElement>(null);
  useEffect(() => {
    if (ref.current) ref.current.indeterminate = state === 2;
  }, [state]);
  return (
    <label className="relative mx-auto block size-[14px]">
      <input
        ref={ref}
        type="checkbox"
        aria-label={label}
        defaultChecked={state === 1}
        disabled={disabled && state !== 1}
        className="peer block size-[14px] appearance-none rounded-[2px] border border-[#8a8a8a] bg-white checked:border-[#55a2fb] checked:bg-[#55a2fb] disabled:border-[#b0b0b0] disabled:bg-[#eee]"
      />
      <svg width="14" height="14" viewBox="0 0 14 14" className="pointer-events-none absolute inset-0 hidden peer-checked:block" aria-hidden="true">
        <path d="M3.500 6.500l2.500 3L10.500 4.500" fill="none" stroke="#fff" strokeWidth="2" />
      </svg>
      <span className="pointer-events-none absolute inset-[2px] hidden rounded-[2px] border border-[#3b90ee] bg-[#9cc8fd] peer-indeterminate:block" />
    </label>
  );
};

const RowName = ({ row, last }: { row: Row; last: boolean }) => (
  <div className="flex h-5 items-center overflow-hidden whitespace-nowrap">
    {row.level === 0 && <span className="w-0.5" />}
    {row.level > 0 && <span className="h-full w-[9px] shrink-0 border-r border-[#e0e0e0]" />}
    {row.level === 1 && <span className="h-px w-[3px] bg-[#e0e0e0]" />}
    {row.level === 2 && <span className={`w-[10px] shrink-0 self-start border-r border-[#e0e0e0] ${last ? "h-[10px]" : "h-full"}`} />}
    {row.level === 2 && <span className="h-px w-4 shrink-0 bg-[#e0e0e0]" />}
    {row.level < 2 && <Toggle open label={row.name} />}
    <span className="ml-1.5">{row.name}</span>
  </div>
);

const DisplayPanel = () => (
  <aside className="flex w-[280px] shrink-0 flex-col border border-t-0 border-[#c3c5c8] bg-[#efefef]">
    <PanelStrip />
    <h2 className="flex h-[22px] shrink-0 items-center border-b border-[#c6c8cc] pl-[7px] text-[12px] text-[#777]">显示设置</h2>
    <div className="flex h-[27px] shrink-0 items-end gap-[3px] border-b border-[#c3c5c8] pl-0.5 text-[12px]">
      <button type="button" className="-mb-px h-[25px] w-[76px] rounded-t border border-b-0 border-[#c3c5c8] bg-white text-[#2f86e8]">图元显示</button>
      <button type="button" className="h-[22px] w-[74px] rounded-t bg-[#dedede] text-[#555]">楼层显示</button>
    </div>
    <div className="flex min-h-0 flex-1 flex-col bg-white pl-0.5 pr-0.5 pt-[3px]">
      <div className="flex min-h-0 flex-1 overflow-hidden border border-[#c3c5c8]">
        <div className="min-w-0 flex-1">
          <table className="w-full table-fixed border-separate border-spacing-0 text-[12px] text-black">
            <colgroup>
              <col />
              <col className="w-[63px]" />
              <col className="w-[63px]" />
            </colgroup>
            <thead>
              <tr className="h-[21px] bg-[#efefef] text-[#444]">
                {["图层构件", "显示图元", "显示名称"].map((h) => (
                  <th key={h} className="border-b border-r border-[#c9cbce] p-0 font-normal leading-4">{h}</th>
                ))}
              </tr>
            </thead>
            <tbody>
              {rows.map((r, i) => (
                <tr key={i} className="h-[21px] leading-4">
                  <td className="border-b border-r border-[#d4d4d4] p-0"><RowName row={r} last={r.level === 2 && rows[i + 1]?.level !== 2} /></td>
                  <td className="border-b border-r border-[#d4d4d4] p-0"><Check label={`${r.name} 显示图元`} state={r.show} /></td>
                  <td className="border-b border-r border-[#d4d4d4] p-0"><Check label={`${r.name} 显示名称`} state={0} disabled={r.locked} /></td>
                </tr>
              ))}
            </tbody>
          </table>
        </div>
        <div className="flex w-[14px] shrink-0 justify-center pt-[14px]">
          <span className="h-[190px] w-2 rounded-full bg-[#cdcdcd]" />
        </div>
      </div>
      <div className="flex h-[39px] shrink-0 items-center justify-end pr-1.5">
        <button type="button" className="h-[26px] w-[90px] rounded border border-[#c9c9c9] bg-white text-[12px] text-[#222]">恢复默认设置</button>
      </div>
    </div>
  </aside>
);

/* ---------- status bar ---------- */
const statusBtn = "flex h-[25px] items-center justify-center gap-1 border border-[#9d9da0] bg-[#cfcfd2]";

const StatusBar = () => (
  <footer className="shrink-0">
    <div className="flex h-[29px] items-center whitespace-nowrap bg-[#dddddf] pt-px text-[12px] text-[#333]">
      <span className="w-[265px] shrink-0 pl-0.5">X = 14103 Y = 5053</span>
      <span className="w-[83px] shrink-0">层高： 3</span>
      <span className="w-[133px] shrink-0">标高： 3.95~6.95</span>
      <span className="w-[103px] shrink-0">1(1)</span>
      <span className="w-[103px] shrink-0">隐藏：0</span>
      <div className="flex items-center gap-[3px]">
        <button type="button" aria-label="正交" className={`${statusBtn} w-[25px]`}><S><path d="M3.500 2v11.500H14M3.500 9h4v4" stroke="#444" /></S></button>
        <button type="button" aria-label="捕捉方式" className="mr-[3px] flex h-[25px] w-9 items-center justify-center gap-1.5 border border-[#3b90ee] bg-white"><S s={18}><path d="M3 4h11v11H3z" strokeWidth={1.400} /><rect x="1" y="2" width="4" height="4" fill="#fbb27a" stroke={O} /></S><Caret /></button>
        <button type="button" aria-label="交点" disabled className="mr-[3px] flex h-[25px] w-[25px] items-center justify-center border border-[#b3b3b6] bg-[#cfcfd2]"><S s={18}><path d="M2 2l12 12M14 2L2 14" stroke="#777" strokeWidth={0.900} /></S></button>
        <button type="button" aria-label="角度" className={`${statusBtn} w-9`}><S><path d="M12 2L1 13.500h14" stroke="#444" /><path d="M5.500 6.500h3v3h-3z" fill="#333" stroke="none" /></S><Caret /></button>
        <button type="button" aria-label="偏移" className={`${statusBtn} w-9`}><S><path d="M4 1v7M.500 4.500h7" stroke="#333" /><path d="M7 9.500h9v4.500H7z" fill="#333" stroke="none" /></S><Caret /></button>
        <button type="button" className={`${statusBtn} w-[73px]`}>跨图层选择</button>
        <button type="button" className={`${statusBtn} w-[61px]`}>折线选择</button>
      </div>
      <span className="ml-1.5">按鼠标左键指定第一个角点，或拾取构件图元</span>
      <span className="ml-auto pr-[29px]">1000 FPS</span>
    </div>
    <div className="h-[5px] border-b-2 border-t border-b-[#d4d0c4] border-t-black bg-[#f7f5ee]" />
  </footer>
);

export default function App() {
  return (
    <div className="flex h-screen overflow-hidden font-['Noto_Sans','Noto_Sans_CJK_SC',sans-serif] text-[12px] leading-4">
      <div className="flex min-w-0 flex-1 flex-col bg-white">
        <Header />
        <Ribbon />
        <SelectorBar />
        <div className="flex min-h-0 flex-1">
          <NavPanel />
          <div className="ml-1 flex w-[280px] shrink-0 flex-col gap-1">
            <ListPanel />
            <PropPanel />
          </div>
          <Splitter dir="left" />
          <Canvas />
          <Splitter dir="right" />
          <DisplayPanel />
        </div>
        <StatusBar />
      </div>
      <div className="flex w-1 shrink-0 flex-col">
        <div className="flex-1 bg-[#d3bdb8]" />
        <div className="h-[132px] bg-black" />
      </div>
    </div>
  );
}
